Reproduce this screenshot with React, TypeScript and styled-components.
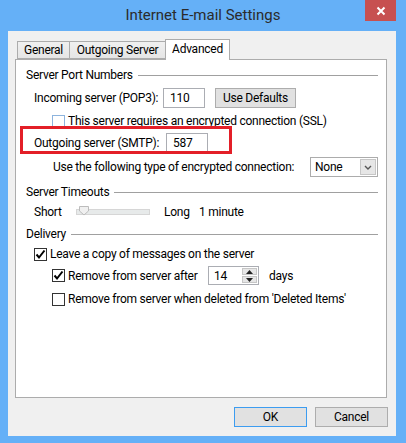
import styled, { createGlobalStyle } from "styled-components";

const GlobalStyle = createGlobalStyle`
  html, body {
    margin: 0;
    padding: 0;
  }
  body {
    font-family: Roboto, "Noto Sans", sans-serif;
    font-size: 12px;
    letter-spacing: -0.25px;
    color: #000;
  }
  * {
    box-sizing: border-box;
  }
`;

const Frame = styled.div`
  width: 406px;
  height: 443px;
  background: #65b0f7;
  display: flex;
  flex-direction: column;
`;

const TitleBar = styled.div`
  height: 31px;
  display: grid;
  grid-template-columns: 1fr auto 1fr;
  align-items: start;
`;

const Title = styled.div`
  grid-column: 2;
  font-size: 15px;
  letter-spacing: 0;
  line-height: 31px;
  color: #2b2b2b;
`;

const CloseButton = styled.div`
  grid-column: 3;
  justify-self: end;
  width: 31px;
  height: 21px;
  margin-right: 10px;
  background: #c75050;
  display: flex;
  align-items: center;
  justify-content: center;
`;

const Client = styled.div`
  flex: 1;
  margin: 0 10px 7px 8px;
  background: #f0f0f0;
  padding: 8px 9px 9px 7px;
  display: flex;
  flex-direction: column;
`;

const TabStrip = styled.div`
  display: flex;
  align-items: flex-end;
  height: 21px;
  padding-left: 2px;
  margin-bottom: -1px;
  position: relative;
  z-index: 1;
`;

const Tab = styled.div<{ $active?: boolean; $width: number }>`
  width: ${(p) => p.$width}px;
  height: ${(p) => (p.$active ? 21 : 18)}px;
  margin-bottom: ${(p) => (p.$active ? 0 : 1)}px;
  margin-left: -1px;
  border: 1px solid #acacac;
  border-bottom: ${(p) => (p.$active ? "none" : "1px solid #acacac")};
  background: ${(p) =>
    p.$active ? "#fff" : "linear-gradient(#f0f0f0, #e5e5e5)"};
  display: flex;
  align-items: center;
  justify-content: center;
  padding-bottom: ${(p) => (p.$active ? 3 : 0)}px;
  &:first-child {
    margin-left: 0;
  }
`;

const Panel = styled.div`
  height: 339px;
  border: 1px solid #acacac;
  background: #fff;
  display: flex;
  flex-direction: column;
  padding-top: 7px;
`;

const GroupHeader = styled.div<{ $top: number }>`
  display: flex;
  align-items: center;
  height: 16px;
  margin-top: ${(p) => p.$top}px;
  padding: 0 8px 0 10px;
  &::after {
    content: "";
    flex: 1;
    height: 1px;
    margin-left: 5px;
    background: #a0a0a0;
  }
`;

const Row = styled.div<{ $top: number; $indent: number; $height: number }>`
  display: flex;
  align-items: center;
  position: relative;
  height: ${(p) => p.$height}px;
  margin-top: ${(p) => p.$top}px;
  padding-left: ${(p) => p.$indent}px;
`;

const Label = styled.span<{ $width?: number }>`
  width: ${(p) => (p.$width ? `${p.$width}px` : "auto")};
  flex-shrink: 0;
  white-space: nowrap;
`;

const TextBox = styled.div<{ $height: number }>`
  width: 42px;
  height: ${(p) => p.$height}px;
  border: 1px solid #abadb3;
  background: #fff;
  padding-left: 6px;
  display: flex;
  align-items: center;
`;

const PushButton = styled.div<{ $width: number; $default?: boolean; $gap?: number }>`
  width: ${(p) => p.$width}px;
  height: 20px;
  margin-left: ${(p) => p.$gap ?? 0}px;
  background: #e1e1e1;
  border: 1px solid ${(p) => (p.$default ? "#3c9cf0" : "#adadad")};
  display: flex;
  align-items: center;
  justify-content: center;
`;

const Highlight = styled.div`
  position: absolute;
  left: 4px;
  top: -7px;
  width: 212px;
  height: 28px;
  border: 3px solid #e31f28;
  pointer-events: none;
`;

const Select = styled.div`
  width: 68px;
  height: 20px;
  border: 1px solid #acacac;
  background: #fff;
  display: flex;
  align-items: center;
  justify-content: space-between;
  padding: 0 1px 0 4px;
`;

const SelectArrow = styled.div`
  width: 16px;
  height: 16px;
  background: #e6e6e6;
  border: 1px solid #c6c6c6;
  display: flex;
  align-items: center;
  justify-content: center;
`;

const Track = styled.div`
  width: 74px;
  height: 16px;
  position: relative;
  display: flex;
  align-items: center;
  margin-right: 14px;
  &::before {
    content: "";
    width: 100%;
    height: 4px;
    background: #e7eaea;
    border: 1px solid #d6d6d6;
  }
`;

const Thumb = styled.svg`
  position: absolute;
  left: 3px;
  top: 2px;
`;

const Box = styled.div<{ $tone?: string }>`
  width: 13px;
  height: 13px;
  border: 1px solid ${(p) => p.$tone || "#333"};
  background: #fff;
  flex-shrink: 0;
  margin-right: 3px;
  display: flex;
  align-items: center;
  justify-content: center;
`;

const Spinner = styled.div`
  width: 51px;
  height: 19px;
  border: 1px solid #abadb3;
  background: #fff;
  display: flex;
  align-items: center;
  justify-content: space-between;
  padding: 1px 1px 1px 5px;
  margin-right: 10px;
`;

const SpinButtons = styled.div`
  width: 15px;
  height: 100%;
  display: flex;
  flex-direction: column;
  gap: 1px;
`;

const SpinButton = styled.div`
  flex: 1;
  background: #e6e6e6;
  border: 1px solid #c6c6c6;
  display: flex;
  align-items: center;
  justify-content: center;
`;

const ButtonRow = styled.div`
  display: flex;
  justify-content: flex-end;
  gap: 8px;
  margin-top: 9px;
  margin-right: -1px;
`;

const Check = ({ checked, tone }: { checked?: boolean; tone?: string }) => (
  <Box $tone={tone}>
    {checked && (
      <svg width="11" height="11" viewBox="0 0 11 11">
        <path d="M1.5 5.5 L4 8.5 L9.5 1.5" fill="none" stroke="#000" strokeWidth="2" />
      </svg>
    )}
  </Box>
);

const App = () => {
  return (
    <>
      <GlobalStyle />
      <Frame>
        <TitleBar>
          <Title>Internet E-mail Settings</Title>
          <CloseButton>
            <svg width="10" height="10" viewBox="0 0 10 10">
              <path d="M1.5 1.5 L8.5 8.5 M8.5 1.5 L1.5 8.5" stroke="#fff" strokeWidth="2" />
            </svg>
          </CloseButton>
        </TitleBar>
        <Client>
          <TabStrip>
            <Tab $width={53}>General</Tab>
            <Tab $width={97}>Outgoing Server</Tab>
            <Tab $width={65} $active>
              Advanced
            </Tab>
          </TabStrip>
          <Panel>
            <GroupHeader $top={0}>Server Port Numbers</GroupHeader>
            <Row $top={5} $indent={18} $height={20}>
              <Label $width={129}>Incoming server (POP3):</Label>
              <TextBox $height={20}>110</TextBox>
              <PushButton $width={81} $gap={10}>
                Use Defaults
              </PushButton>
            </Row>
            <Row $top={6} $indent={36} $height={14}>
              <Check tone="#8db4de" />
              <Label>This server requires an encrypted connection (SSL)</Label>
            </Row>
            <Row $top={5} $indent={18} $height={19}>
              <Highlight />
              <Label $width={132}>Outgoing server (SMTP):</Label>
              <TextBox $height={19}>587</TextBox>
            </Row>
            <Row $top={5} $indent={37} $height={20}>
              <Label $width={257}>Use the following type of encrypted connection:</Label>
              <Select>
                None
                <SelectArrow>
                  <svg width="8" height="5" viewBox="0 0 8 5">
                    <path d="M1 1 L4 4 L7 1" fill="none" stroke="#555" strokeWidth="1.4" />
                  </svg>
                </SelectArrow>
              </Select>
            </Row>
            <GroupHeader $top={7}>Server Timeouts</GroupHeader>
            <Row $top={4} $indent={18} $height={16}>
              <Label $width={42}>Short</Label>
              <Track>
                <Thumb width="10" height="10" viewBox="0 0 10 10">
                  <path d="M0.5 0.5 H9.5 V5 L5 9 L0.5 5 Z" fill="#f0f0f0" stroke="#bcbcbc" />
                </Thumb>
              </Track>
              <Label $width={35}>Long</Label>
              <Label>1 minute</Label>
            </Row>
            <GroupHeader $top={6}>Delivery</GroupHeader>
            <Row $top={5} $indent={18} $height={14}>
              <Check checked />
              <Label>Leave a copy of messages on the server</Label>
            </Row>
            <Row $top={5} $indent={36} $height={19}>
              <Check checked />
              <Label $width={140}>Remove from server after</Label>
              <Spinner>
                14
                <SpinButtons>
                  <SpinButton>
                    <svg width="7" height="4" viewBox="0 0 7 4">
                      <path d="M0 4 L3.5 0 L7 4 Z" fill="#222" />
                    </svg>
                  </SpinButton>
                  <SpinButton>
                    <svg width="7" height="4" viewBox="0 0 7 4">
                      <path d="M0 0 L3.5 4 L7 0 Z" fill="#222" />
                    </svg>
                  </SpinButton>
                </SpinButtons>
              </Spinner>
              <Label>days</Label>
            </Row>
            <Row $top={7} $indent={36} $height={14}>
              <Check />
              <Label>Remove from server when deleted from 'Deleted Items'</Label>
            </Row>
          </Panel>
          <ButtonRow>
            <PushButton $width={73} $default>
              OK
            </PushButton>
            <PushButton $width={73}>Cancel</PushButton>
          </ButtonRow>
        </Client>
      </Frame>
    </>
  );
};

export default App;
